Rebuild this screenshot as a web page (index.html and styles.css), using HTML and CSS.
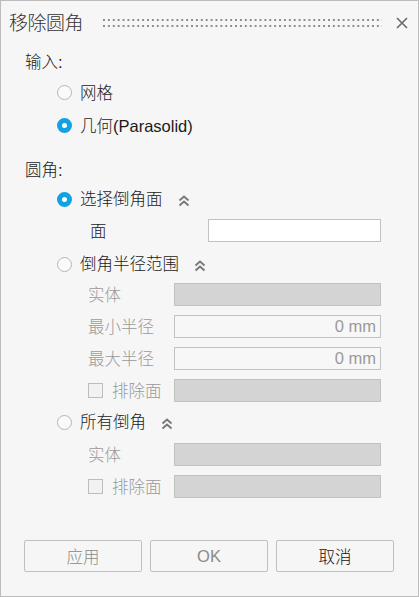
FILE: index.html
```html
<!DOCTYPE html>
<html lang="zh-CN">
<head>
<meta charset="utf-8">
<title>移除圆角</title>
<link rel="stylesheet" href="styles.css">
</head>
<body>
<div class="dialog">
  <div class="titlebar">
    <span class="title">移除圆角</span>
    <span class="grip"></span>
    <svg class="close" width="12" height="12" viewBox="0 0 12 12"><path d="M1 1L11 11M11 1L1 11" stroke="#6a6a6a" stroke-width="1.6" fill="none"/></svg>
  </div>

  <div class="body">
    <div class="section-label s-input">输入:</div>
    <label class="radio-row r-mesh"><span class="radio"></span><span class="rtext">网格</span></label>
    <label class="radio-row"><span class="radio checked"></span><span class="rtext">几何(Parasolid)</span></label>

    <div class="section-label s-fillet">圆角:</div>

    <div class="radio-row r-first">
      <span class="radio checked"></span><span class="rtext">选择倒角面</span>
      <svg class="chev" width="12" height="12" viewBox="0 0 12 12"><path d="M1.5 5.5L6 1.5L10.5 5.5M1.5 10.5L6 6.5L10.5 10.5" stroke="#777" stroke-width="1.8" fill="none"/></svg>
    </div>
    <div class="field-row face-row">
      <span class="flabel">面</span>
      <span class="field white wide"></span>
    </div>

    <div class="radio-row r-range">
      <span class="radio"></span><span class="rtext">倒角半径范围</span>
      <svg class="chev" width="12" height="12" viewBox="0 0 12 12"><path d="M1.5 5.5L6 1.5L10.5 5.5M1.5 10.5L6 6.5L10.5 10.5" stroke="#777" stroke-width="1.8" fill="none"/></svg>
    </div>
    <div class="fields g-range">
      <div class="field-row"><span class="flabel dim">实体</span><span class="field grey"></span></div>
      <div class="field-row"><span class="flabel dim">最小半径</span><span class="field light">0 mm</span></div>
      <div class="field-row"><span class="flabel dim">最大半径</span><span class="field light">0 mm</span></div>
      <div class="field-row"><span class="check"></span><span class="flabel dim ctext">排除面</span><span class="field grey"></span></div>
    </div>

    <div class="radio-row r-all">
      <span class="radio"></span><span class="rtext">所有倒角</span>
      <svg class="chev" width="12" height="12" viewBox="0 0 12 12"><path d="M1.5 5.5L6 1.5L10.5 5.5M1.5 10.5L6 6.5L10.5 10.5" stroke="#777" stroke-width="1.8" fill="none"/></svg>
    </div>
    <div class="fields g-all">
      <div class="field-row"><span class="flabel dim">实体</span><span class="field grey"></span></div>
      <div class="field-row"><span class="check"></span><span class="flabel dim ctext">排除面</span><span class="field grey"></span></div>
    </div>
  </div>

  <div class="buttons">
    <button class="btn dim-btn">应用</button>
    <button class="btn dim-btn">OK</button>
    <button class="btn">取消</button>
  </div>
</div>
</body>
</html>
```

FILE: styles.css
```css
html, body {
  margin: 0;
  padding: 0;
}

body {
  font-family: "Liberation Sans", "Noto Sans CJK SC", sans-serif;
  font-size: 16.5px;
  font-weight: 300;
  color: #1a1a1a;
}

.dialog {
  width: 419px;
  height: 597px;
  box-sizing: border-box;
  border: 1px solid #bcbcbc;
  background: #f6f6f6;
  display: flex;
  flex-direction: column;
}

/* title bar with drag grip and close button */
.titlebar {
  height: 43px;
  display: flex;
  align-items: center;
  padding: 0 10px 0 8px;
  box-sizing: border-box;
}

.title {
  font-family: "Noto Sans CJK SC", sans-serif;
  font-size: 19px;
  font-weight: 300;
  line-height: 24px;
  color: #333;
  letter-spacing: -0.5px;
  margin-top: -1px;
}

.grip {
  flex: 1;
  height: 8px;
  margin: 1px 0 0 20px;
  background-image: radial-gradient(circle at 1px 1px, #8e8e8e 1.1px, transparent 1.3px);
  background-size: 4.9px 6px;
  background-repeat: repeat;
}

.close {
  margin-left: 14px;
  margin-top: 1px;
}

/* main content */
.body {
  padding-left: 24px;
  padding-right: 37px;
  display: flex;
  flex-direction: column;
}

.section-label {
  height: 20px;
  line-height: 20px;
}

.s-input { margin-top: 8px; }
.s-fillet { margin-top: 18px; }

.radio-row {
  height: 33px;
  display: flex;
  align-items: center;
  padding-left: 32px;
}

.r-mesh { margin-top: 4px; }
.r-first { margin-top: 3px; height: 32px; }
.r-range { margin-top: 6px; height: 32px; }
.r-all { margin-top: 4px; height: 32px; }

.radio {
  width: 15px;
  height: 15px;
  box-sizing: border-box;
  border: 1.6px solid #b6b6b6;
  border-radius: 50%;
  background: #fafafa;
  flex: none;
}

.radio.checked {
  border: 5px solid #10a2e3;
  background: #fff;
}

.rtext {
  margin-left: 8px;
  line-height: 20px;
}

.chev {
  margin-left: 15px;
  margin-top: 3px;
}

/* labelled input rows */
.fields {
  display: flex;
  flex-direction: column;
  gap: 9px;
}

.g-range { margin-top: 3px; }
.g-all { margin-top: 5px; }

.field-row {
  height: 23px;
  display: flex;
  align-items: center;
  padding-left: 63px;
}

.face-row { margin-top: 4px; }

.flabel {
  line-height: 20px;
  width: 86px;
  flex: none;
}

.face-row .flabel {
  width: 120px;
  padding-left: 2px;
  box-sizing: border-box;
}

.flabel.dim { color: #9a9a9a; }

.check {
  width: 15px;
  height: 15px;
  box-sizing: border-box;
  border: 1px solid #bdbdbd;
  background: #f2f2f2;
  flex: none;
}

.ctext {
  width: 62px;
  margin-left: 9px;
}

.field {
  flex: 1;
  height: 23px;
  box-sizing: border-box;
  border: 1px solid #c2c2c2;
  font-size: 16.5px;
  font-weight: 400;
  line-height: 21px;
  text-align: right;
  padding-right: 4px;
  color: #9a9a9a;
}

.field.white { background: #ffffff; }
.field.grey { background: #d4d4d4; }
.field.light { background: #f7f7f7; }

/* bottom buttons */
.buttons {
  margin-top: auto;
  margin-bottom: 24px;
  display: flex;
  gap: 8px;
  padding: 0 23px;
}

.btn {
  width: 118px;
  height: 32px;
  box-sizing: border-box;
  border: 1px solid #c0c0c0;
  border-radius: 2px;
  background: #f6f6f6;
  font-family: "Liberation Sans", "Noto Sans CJK SC", sans-serif;
  font-size: 16.5px;
  font-weight: 300;
  color: #111;
  padding: 0;
}

.btn.dim-btn { color: #8a8a8a; }
```
